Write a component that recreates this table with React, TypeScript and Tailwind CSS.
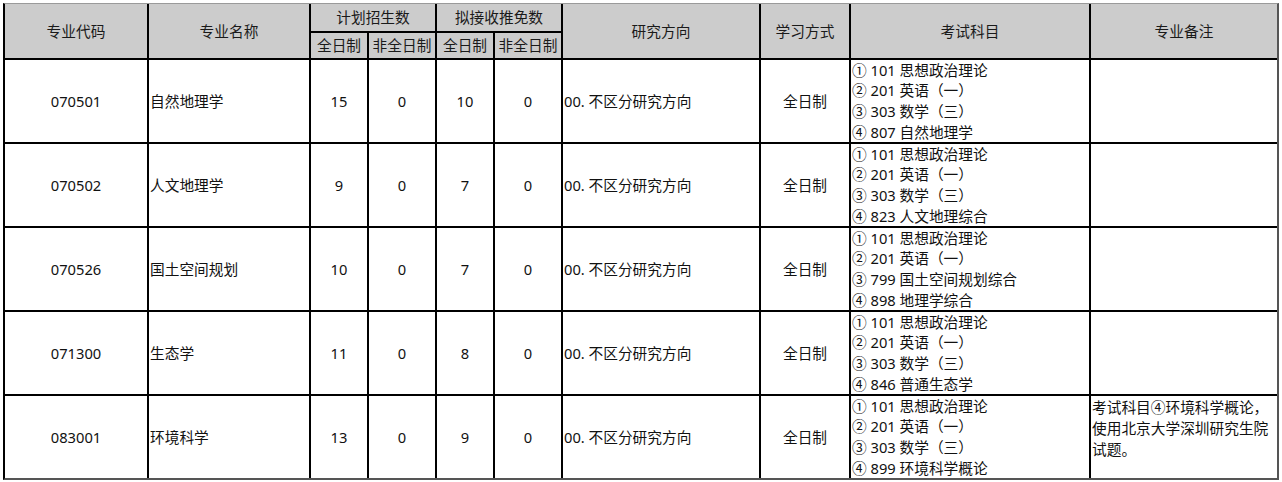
import React from "react";

const rows = [
  { code: "070501", name: "自然地理学", p1: "15", p2: "0", t1: "10", t2: "0", s4: "④ 807 自然地理学", s3: "③ 303 数学（三）", note: "" },
  { code: "070502", name: "人文地理学", p1: "9", p2: "0", t1: "7", t2: "0", s4: "④ 823 人文地理综合", s3: "③ 303 数学（三）", note: "" },
  { code: "070526", name: "国土空间规划", p1: "10", p2: "0", t1: "7", t2: "0", s4: "④ 898 地理学综合", s3: "③ 799 国土空间规划综合", note: "" },
  { code: "071300", name: "生态学", p1: "11", p2: "0", t1: "8", t2: "0", s4: "④ 846 普通生态学", s3: "③ 303 数学（三）", note: "" },
  { code: "083001", name: "环境科学", p1: "13", p2: "0", t1: "9", t2: "0", s4: "④ 899 环境科学概论", s3: "③ 303 数学（三）", note: "考试科目④环境科学概论，使用北京大学深圳研究生院试题。" },
];

const hd = "bg-[#cccccc] flex items-center justify-center text-[#1a1a1a]";
const cell = "bg-white flex items-center";

export default function App() {
  return (
    <div
      className="w-[1282px] h-[482px] bg-white pt-[3px] pl-[3px] text-[14.7px] text-[#111]"
      style={{ fontFamily: '"Noto Sans", "Noto Sans CJK SC", sans-serif' }}
    >
      <div className="w-[1276px] border-t border-t-[#9a9a9a] border-l-2 border-l-black border-r-2 border-r-[#555] border-b-2 border-b-[#555]">
        <div className="grid grid-cols-[142px_160px_56px_66px_56px_66px_196px_88px_238px_186px] grid-rows-[27px_25px_82px_82px_82px_82px_82px] gap-[2px] bg-black leading-none">
          <div className={`${hd} row-span-2`}>专业代码</div>
          <div className={`${hd} row-span-2`}>专业名称</div>
          <div className={`${hd} col-span-2`}>计划招生数</div>
          <div className={`${hd} col-span-2`}>拟接收推免数</div>
          <div className={`${hd} row-span-2`}>研究方向</div>
          <div className={`${hd} row-span-2`}>学习方式</div>
          <div className={`${hd} row-span-2`}>考试科目</div>
          <div className={`${hd} row-span-2`}>专业备注</div>
          <div className={hd}>全日制</div>
          <div className={hd}>非全日制</div>
          <div className={hd}>全日制</div>
          <div className={hd}>非全日制</div>
          {rows.map((r) => (
            <React.Fragment key={r.code}>
              <div className={`${cell} justify-center`}>{r.code}</div>
              <div className={`${cell} pl-[1px]`}>{r.name}</div>
              <div className={`${cell} justify-center`}>{r.p1}</div>
              <div className={`${cell} justify-center`}>{r.p2}</div>
              <div className={`${cell} justify-center`}>{r.t1}</div>
              <div className={`${cell} justify-center`}>{r.t2}</div>
              <div className={`${cell} pl-[1px]`}>00. 不区分研究方向</div>
              <div className={`${cell} justify-center`}>全日制</div>
              <div className="bg-white flex flex-col justify-center pl-[1px] leading-[20.7px] overflow-visible whitespace-nowrap">
                <div>① 101 思想政治理论</div>
                <div>② 201 英语（一）</div>
                <div>{r.s3}</div>
                <div>{r.s4}</div>
              </div>
              <div className="bg-white pl-[1px] pt-[1px] leading-[21px] break-all">{r.note}</div>
            </React.Fragment>
          ))}
        </div>
      </div>
    </div>
  );
}
